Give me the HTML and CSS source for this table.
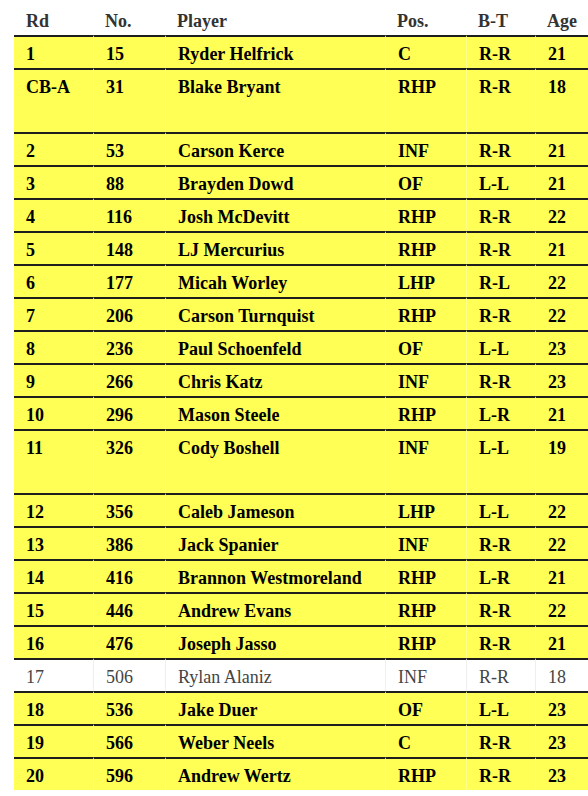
FILE: index.html
```html
<!DOCTYPE html>
<html>
<head>
<meta charset="utf-8">
<link rel="stylesheet" href="styles.css">
</head>
<body>
<table class="draft">
  <colgroup>
    <col class="c-rd"><col class="c-no"><col class="c-player"><col class="c-pos"><col class="c-bt"><col class="c-age">
  </colgroup>
  <thead>
    <tr><th>Rd</th><th>No.</th><th>Player</th><th>Pos.</th><th>B-T</th><th>Age</th></tr>
  </thead>
  <tbody>
    <tr class="pick"><td>1</td><td>15</td><td>Ryder Helfrick</td><td>C</td><td>R-R</td><td>21</td></tr>
    <tr class="pick tall"><td>CB-A</td><td>31</td><td>Blake Bryant</td><td>RHP</td><td>R-R</td><td>18</td></tr>
    <tr class="pick"><td>2</td><td>53</td><td>Carson Kerce</td><td>INF</td><td>R-R</td><td>21</td></tr>
    <tr class="pick"><td>3</td><td>88</td><td>Brayden Dowd</td><td>OF</td><td>L-L</td><td>21</td></tr>
    <tr class="pick"><td>4</td><td>116</td><td>Josh McDevitt</td><td>RHP</td><td>R-R</td><td>22</td></tr>
    <tr class="pick"><td>5</td><td>148</td><td>LJ Mercurius</td><td>RHP</td><td>R-R</td><td>21</td></tr>
    <tr class="pick"><td>6</td><td>177</td><td>Micah Worley</td><td>LHP</td><td>R-L</td><td>22</td></tr>
    <tr class="pick"><td>7</td><td>206</td><td>Carson Turnquist</td><td>RHP</td><td>R-R</td><td>22</td></tr>
    <tr class="pick"><td>8</td><td>236</td><td>Paul Schoenfeld</td><td>OF</td><td>L-L</td><td>23</td></tr>
    <tr class="pick"><td>9</td><td>266</td><td>Chris Katz</td><td>INF</td><td>R-R</td><td>23</td></tr>
    <tr class="pick"><td>10</td><td>296</td><td>Mason Steele</td><td>RHP</td><td>L-R</td><td>21</td></tr>
    <tr class="pick tall"><td>11</td><td>326</td><td>Cody Boshell</td><td>INF</td><td>L-L</td><td>19</td></tr>
    <tr class="pick"><td>12</td><td>356</td><td>Caleb Jameson</td><td>LHP</td><td>L-L</td><td>22</td></tr>
    <tr class="pick"><td>13</td><td>386</td><td>Jack Spanier</td><td>INF</td><td>R-R</td><td>22</td></tr>
    <tr class="pick"><td>14</td><td>416</td><td>Brannon Westmoreland</td><td>RHP</td><td>L-R</td><td>21</td></tr>
    <tr class="pick"><td>15</td><td>446</td><td>Andrew Evans</td><td>RHP</td><td>R-R</td><td>22</td></tr>
    <tr class="pick"><td>16</td><td>476</td><td>Joseph Jasso</td><td>RHP</td><td>R-R</td><td>21</td></tr>
    <tr class="unsigned"><td>17</td><td>506</td><td>Rylan Alaniz</td><td>INF</td><td>R-R</td><td>18</td></tr>
    <tr class="pick"><td>18</td><td>536</td><td>Jake Duer</td><td>OF</td><td>L-L</td><td>23</td></tr>
    <tr class="pick"><td>19</td><td>566</td><td>Weber Neels</td><td>C</td><td>R-R</td><td>23</td></tr>
    <tr class="pick"><td>20</td><td>596</td><td>Andrew Wertz</td><td>RHP</td><td>R-R</td><td>23</td></tr>
  </tbody>
</table>
</body>
</html>
```
FILE: styles.css
```css
html, body {
  margin: 0;
  padding: 0;
  background: #ffffff;
  overflow: hidden;
}

.draft {
  margin-left: 14px;
  width: 574px;
  table-layout: fixed;
  border-collapse: separate;
  border-spacing: 0;
  font-family: "Liberation Serif", "Times New Roman", serif;
  font-size: 18px;
  line-height: 20px;
}

.c-rd { width: 79px; }
.c-no { width: 72px; }
.c-player { width: 220px; }
.c-pos { width: 81px; }
.c-bt { width: 69px; }
.c-age { width: 53px; }

.draft th {
  text-align: left;
  font-weight: bold;
  color: #333333;
  padding: 11px 12px 4px 12px;
  white-space: nowrap;
}

.draft td {
  text-align: left;
  vertical-align: top;
  padding: 7px 12px 4px 12px;
  border-top: 2px solid #1e1e1e;
  white-space: nowrap;
  overflow: hidden;
}

.pick td {
  background: #ffff55;
  font-weight: bold;
  color: #000000;
}

.pick td + td {
  border-left: 1px solid #ffff8c;
}

.tall td {
  padding-bottom: 35px;
}

.unsigned td {
  background: #ffffff;
  font-weight: normal;
  color: #444444;
}

.unsigned td + td {
  border-left: 1px solid #efefef;
}
```
